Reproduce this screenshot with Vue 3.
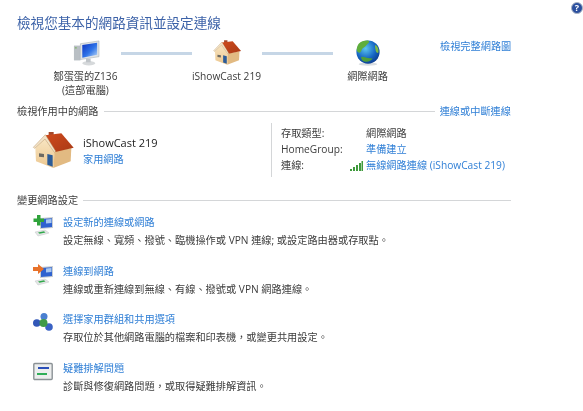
<script setup>
const tasks = [
  { icon: "add", title: "設定新的連線或網路", desc: "設定無線、寬頻、撥號、臨機操作或 VPN 連線; 或設定路由器或存取點。" },
  { icon: "connect", title: "連線到網路", desc: "連線或重新連線到無線、有線、撥號或 VPN 網路連線。" },
  { icon: "share", title: "選擇家用群組和共用選項", desc: "存取位於其他網路電腦的檔案和印表機，或變更共用設定。" },
  { icon: "fix", title: "疑難排解問題", desc: "診斷與修復網路問題，或取得疑難排解資訊。" },
];
</script>

<template>
  <div class="page">
    <div class="help">?</div>
    <svg width="0" height="0" class="defs">
      <defs>
        <linearGradient id="scr" x1="0" y1="0" x2="1" y2="1">
          <stop offset="0" stop-color="#0a2fc0" />
          <stop offset="0.55" stop-color="#2f74e8" />
          <stop offset="1" stop-color="#bcd8f6" />
        </linearGradient>
        <radialGradient id="globe" cx="0.4" cy="0.35" r="0.7">
          <stop offset="0" stop-color="#5cc6ef" />
          <stop offset="0.6" stop-color="#1767c4" />
          <stop offset="1" stop-color="#0b3a8c" />
        </radialGradient>
        <linearGradient id="wall" x1="0" y1="0" x2="0" y2="1">
          <stop offset="0" stop-color="#f8e6c4" />
          <stop offset="1" stop-color="#ecc78f" />
        </linearGradient>
        <linearGradient id="roof" x1="0" y1="0" x2="1" y2="1">
          <stop offset="0" stop-color="#cf4a1c" />
          <stop offset="1" stop-color="#a93a16" />
        </linearGradient>
        <symbol id="house" viewBox="0 0 150 144">
          <path d="M62 18h15v16H62z" fill="#a4482a" />
          <path d="M22 66 52 34l30 42-6 50-52-20z" fill="url(#wall)" />
          <path d="M80 76l50-10-2 40-52 20z" fill="#e2ba82" />
          <path d="M52 28 100 22l37 43-55 13z" fill="url(#roof)" />
          <path d="M16 64 52 26l31 50-4 3-28-40-31 28z" fill="#f3e3c8" stroke="#b99668" stroke-width="1.500" />
          <path d="M33 82l15 2v10l-15-2z" fill="#6d6a62" />
          <path d="M58 84l16 4v34l-16-6z" fill="#2c5c98" />
        </symbol>
      </defs>
    </svg>
    <h1 class="title">檢視您基本的網路資訊並設定連線</h1>

    <div class="map">
      <div class="node">
        <svg class="node-icon" viewBox="0 0 30 28">
          <path d="M2 6h7v16H2z" fill="#b9bfc4" />
          <path d="M3 8h2v1H3z" fill="#6fb04a" />
          <path d="M9 4 29 1v17L9 21z" fill="#dfe3e6" stroke="#9aa3a8" stroke-width=".5" />
          <path d="M11 5.500 27 3v13L11 19z" fill="url(#scr)" />
          <ellipse cx="18" cy="25" rx="7" ry="2.400" fill="#d6d9db" />
          <path d="M15 20h5v4h-5z" fill="#bfc4c8" />
        </svg>
        <div class="node-label">鄒蛋蛋的Z136<br />(這部電腦)</div>
      </div>
      <div class="link-line"></div>
      <div class="node">
        <svg class="node-house"><use href="#house" /></svg>
        <div class="node-label">iShowCast 219</div>
      </div>
      <div class="link-line"></div>
      <div class="node">
        <svg class="node-icon" viewBox="0 0 30 28">
          <ellipse cx="15" cy="26" rx="10" ry="1.600" fill="#d9dde0" />
          <circle cx="15" cy="13" r="12.500" fill="url(#globe)" />
          <path d="M5 4c3-3 8-4 11-3 1 2-2 3-3 5s-4 2-5 5-2 3-4 2c-2-2-1-6 1-9z" fill="#5fae3c" />
          <path d="M23 5c3 2 4 6 3 9-2 0-3-2-3-4s-1-3 0-5z" fill="#7dbb45" />
          <path d="M8 18c4 0 7 2 12 2-2 3-7 5-11 2-1-1-2-3-1-4z" fill="#4f9e3a" />
        </svg>
        <div class="node-label">網際網路</div>
      </div>
      <a class="link map-link">檢視完整網路圖</a>
    </div>

    <div class="section-head">
      <span>檢視作用中的網路</span>
      <div class="rule"></div>
      <a class="link">連線或中斷連線</a>
    </div>

    <div class="active">
      <div class="network">
        <svg class="house"><use href="#house" /></svg>
        <div>
          <div class="net-name">iShowCast 219</div>
          <a class="link net-type">家用網路</a>
        </div>
      </div>
      <div class="props">
        <span>存取類型:</span><span>網際網路</span>
        <span>HomeGroup:</span><a class="link">準備建立</a>
        <span>連線:</span>
        <span class="conn">
          <svg class="signal" viewBox="0 0 13 10">
            <path d="M0 8h2v2H0zM3 6h2v4H3zM6 4h2v6H6zM9 2h2v8H9zM11.500 0h1.500v10h-1.500z" fill="#3f9a3c" />
          </svg>
          <a class="link">無線網路連線 (iShowCast 219)</a>
        </span>
      </div>
    </div>

    <div class="section-head change-head">
      <span>變更網路設定</span>
      <div class="rule"></div>
    </div>

    <div class="tasks">
      <div v-for="t in tasks" :key="t.title" class="task">
        <svg class="task-icon" viewBox="0 0 20 22">
          <template v-if="t.icon === 'add' || t.icon === 'connect'">
            <path d="M7 3l13-1v11L7 14z" fill="#c9ced2" />
            <path d="M8 4l11-.8v8.800L8 13z" fill="#2f62cf" />
            <path d="M13 4.500l5.500-.5v4L13 8.500z" fill="#a9c8f0" />
            <path d="M2 17l10-2 4 3-11 3z" fill="#e4e6e6" stroke="#c2c6c8" stroke-width=".5" />
            <path d="M5 17.500l6-1.200 1.500 1.200-6 1.300z" fill="#2fa84a" />
            <path v-if="t.icon === 'add'" d="M4 0h3.500v3.500H11V7H7.500v3.500H4V7H.5V3.500H4z" fill="#2fa33a" />
            <path v-else d="M0 3h5V0l6 5-6 5V7H0z" fill="#e8722a" />
          </template>
          <template v-else-if="t.icon === 'share'">
            <circle cx="11" cy="4.500" r="3.500" fill="#4a7fd0" />
            <circle cx="3.800" cy="11" r="3.800" fill="#3257b8" />
            <circle cx="16" cy="15" r="3.800" fill="#3a62c4" />
            <circle cx="10.500" cy="11" r="4" fill="#3f9a46" />
          </template>
          <template v-else>
            <rect x="0.800" y="2.500" width="18.400" height="16" rx="1" fill="#eceeee" stroke="#8b9296" stroke-width="1.400" />
            <path d="M5 6h11v2H5z" fill="#2b4fb8" />
            <path d="M4 12h10v2H4z" fill="#2fae58" />
          </template>
        </svg>
        <div class="task-text">
          <a class="link">{{ t.title }}</a>
          <div class="desc">{{ t.desc }}</div>
        </div>
      </div>
    </div>
  </div>
</template>

<style scoped>
.page {
  position: relative;
  width: 583px;
  height: 411px;
  overflow: hidden;
  box-sizing: border-box;
  padding: 14px 0 0 17px;
  background: #fff;
  color: #3c3c3c;
  font-family: "Open Sans", "Noto Sans CJK TC", sans-serif;
  font-size: 10.2px;
  line-height: 15px;
  filter: blur(0.4px);
}
.defs {
  position: absolute;
}
.help {
  position: absolute;
  top: 2px;
  left: 571px;
  width: 12px;
  height: 12px;
  border-radius: 50%;
  background: #2a4f9e;
  border: 1px solid #aab4c4;
  box-sizing: border-box;
  color: #fff;
  font-size: 9px;
  font-weight: 700;
  line-height: 10px;
  text-align: center;
}
.title {
  margin: 0;
  font-size: 13.6px;
  font-weight: 400;
  line-height: 18px;
  color: #3c62a8;
}
.link {
  color: #2f7fd6;
}
.map {
  display: flex;
  align-items: flex-start;
  margin-top: 5px;
  height: 67px;
}
.node {
  width: 100px;
  display: flex;
  flex-direction: column;
  align-items: center;
}
.node-icon {
  width: 28px;
  height: 26px;
  margin-top: 3px;
}
.node-house {
  width: 34px;
  height: 33px;
  margin: -1px 0 -3px;
}
.node-label {
  margin-top: 3px;
  line-height: 14px;
  text-align: center;
  white-space: nowrap;
}
.map .node:first-child {
  margin-left: 18.500px;
}
.link-line {
  width: 71px;
  height: 3px;
  margin: 15px -15px 0;
  background: #c6d6e6;
}
.map-link {
  margin: 2px 0 0 22.500px;
}
.section-head {
  display: flex;
  align-items: center;
  gap: 5px;
  width: 494px;
  height: 15px;
  white-space: nowrap;
}
.rule {
  flex: 1;
  height: 1px;
  background: #d4d6d8;
}
.active {
  display: flex;
  height: 54px;
  margin-top: 4px;
}
.network {
  width: 255px;
  display: flex;
  align-items: center;
  gap: 5px;
  padding-left: 11px;
  box-sizing: border-box;
  border-right: 1px solid #d4d6d8;
}
.house {
  width: 50px;
  height: 48px;
}
.net-name {
  font-size: 11px;
  color: #222;
  line-height: 17px;
}
.net-type {
  display: block;
  margin-top: 1px;
}
.props {
  display: grid;
  grid-template-columns: 85px auto;
  grid-auto-rows: 16px;
  align-content: center;
  padding-left: 9px;
}
.conn {
  position: relative;
}
.signal {
  position: absolute;
  left: -16px;
  top: 3px;
  width: 13px;
  height: 10px;
}
.change-head {
  margin-top: 16px;
}
.tasks {
  margin-top: 7px;
  padding-left: 16px;
  display: flex;
  flex-direction: column;
  gap: 15.700px;
}
.task {
  display: flex;
  gap: 10px;
}
.task-icon {
  width: 20px;
  height: 22px;
}
.desc {
  margin-top: 3px;
}
</style>
